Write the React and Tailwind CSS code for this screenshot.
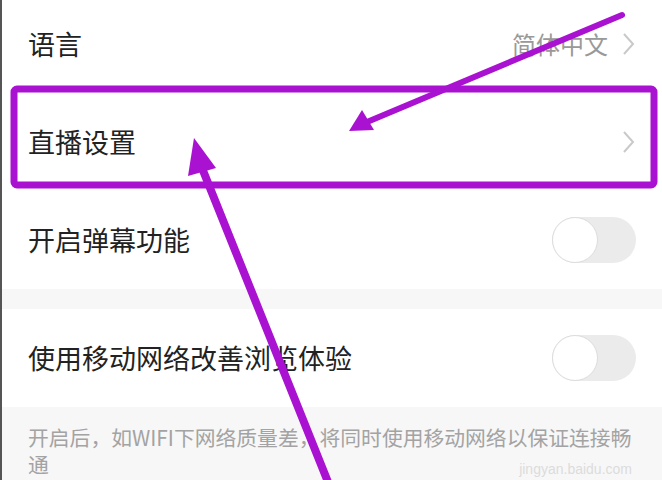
import React from 'react';

const font = { fontFamily: '"Noto Sans CJK SC", "Noto Sans", sans-serif' };

const Chevron = ({ gap }) => (
  <svg width="14" height="24" viewBox="0 0 14 24" className={gap ? 'ml-[14px]' : ''}>
    <path d="M2 2 L11 12 L2 22" fill="none" stroke="#c9c9c9" strokeWidth="2" />
  </svg>
);

const Toggle = () => (
  <div className="w-[84px] h-[46px] rounded-full bg-[#ebebeb] flex items-center">
    <div className="w-[46px] h-[46px] rounded-full bg-white border-[1.5px] border-[#dcdcdc]" />
  </div>
);

const Row = ({ label, right }) => (
  <div className="h-[98px] flex items-center justify-between pl-[26px] pr-[26px] bg-white">
    <span className="text-[27px] text-[#222]">{label}</span>
    {right}
  </div>
);

export default function App() {
  return (
    <div className="relative w-[662px] h-[480px] overflow-hidden bg-white border-l-2 border-[#555]" style={font}>
      <div className="-mt-[5px]">
        <Row
          label="语言"
          right={
            <div className="flex items-center">
              <span className="text-[24px] text-[#999]">简体中文</span>
              <Chevron gap />
            </div>
          }
        />
        <Row label="直播设置" right={<Chevron />} />
        <Row label="开启弹幕功能" right={<Toggle />} />
        <div className="h-[20px] bg-[#f7f7f7]" />
        <Row label="使用移动网络改善浏览体验" right={<Toggle />} />
        <div className="bg-[#f7f7f7] pl-[26px] pr-[24px] pt-[17px] pb-[20px] text-[20.8px] leading-[27px] text-[#a3a3a3]">
          开启后，如WIFI下网络质量差，将同时使用移动网络以保证连接畅通
        </div>
      </div>

      {/* watermark */}
      <div className="absolute right-[30px] bottom-[4px] text-[14px] text-[#dcdcdc] leading-none" style={{ fontFamily: '"Liberation Sans", sans-serif' }}>
        jingyan.baidu.com
      </div>

      {/* annotation overlay */}
      <svg className="absolute left-0 top-0 pointer-events-none" width="662" height="480">
        <rect x="12" y="89" width="640" height="96" rx="3" fill="none" stroke="#a912d0" strokeWidth="7" />
        <line x1="620" y1="15" x2="365" y2="122" stroke="#a912d0" strokeWidth="6" strokeLinecap="round" />
        <polygon points="347,131 360,110 372,130" fill="#a912d0" />
        <line x1="326" y1="482" x2="200" y2="168" stroke="#a912d0" strokeWidth="8" strokeLinecap="round" />
        <polygon points="192,138 186,176 214,168" fill="#a912d0" />
      </svg>
    </div>
  );
}
